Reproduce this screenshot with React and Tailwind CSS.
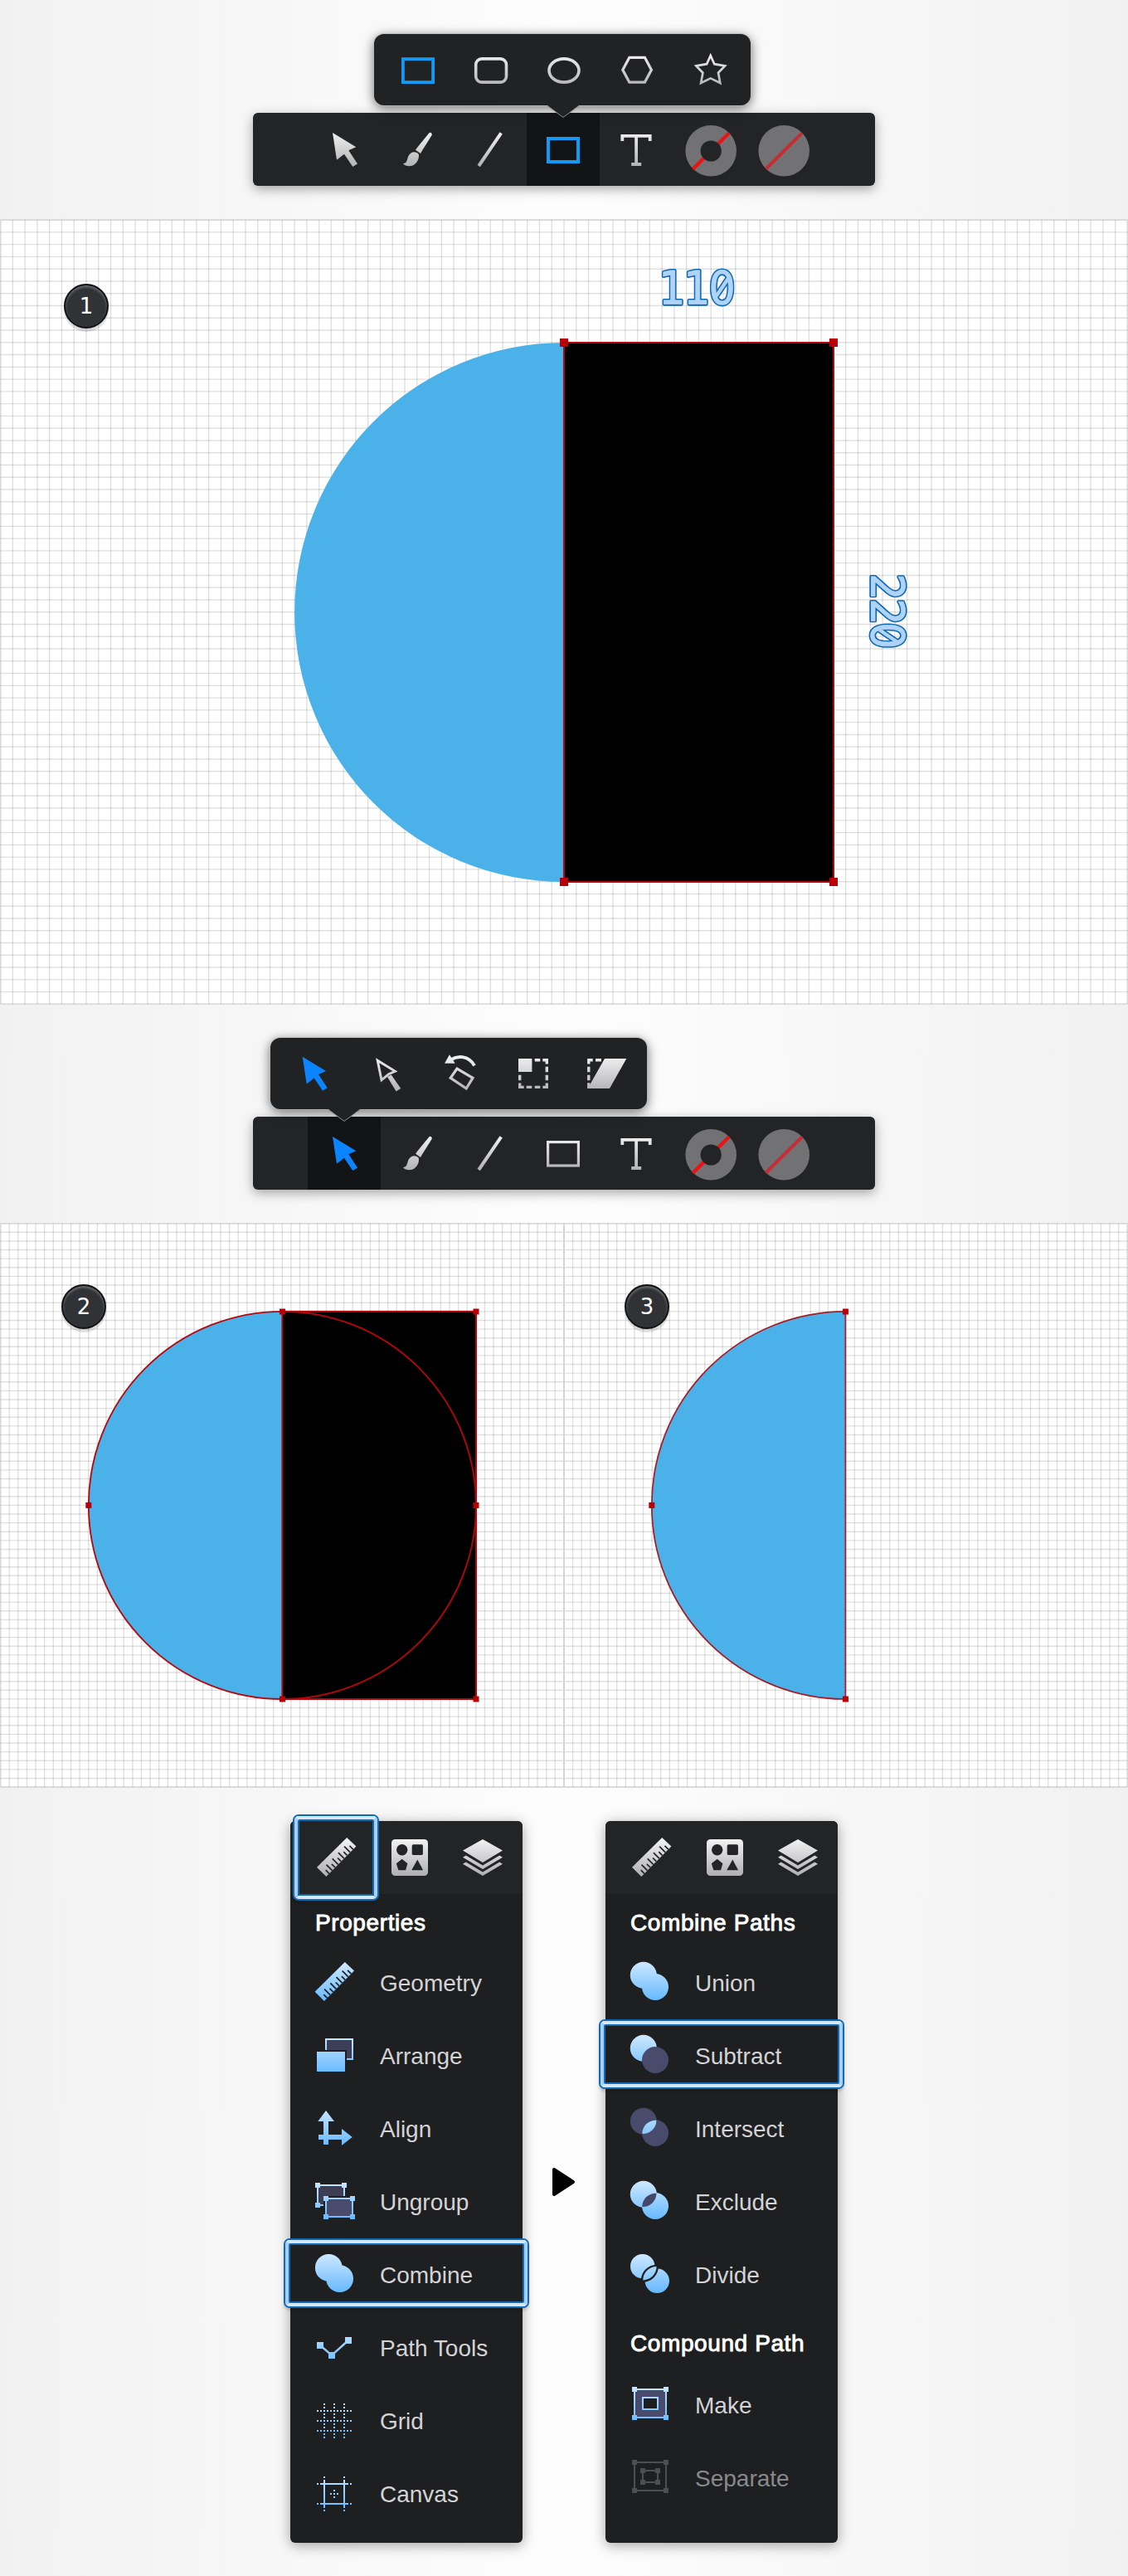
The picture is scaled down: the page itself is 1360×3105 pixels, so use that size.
import React from "react";

const GREY = "url(#grey)";
const BLUE = "url(#sky)";
const SLATE = "#484b6c";
const PANEL = "#1e1f21";

function Gradients() {
  return (
    <svg className="absolute h-0 w-0" aria-hidden="true">
      <defs>
        <linearGradient id="grey" gradientUnits="userSpaceOnUse" x1="0" y1="22" x2="0" y2="66">
          <stop offset="0" stopColor="#f2f2f3" />
          <stop offset="1" stopColor="#b0b0b2" />
        </linearGradient>
        <linearGradient id="sky" gradientUnits="userSpaceOnUse" x1="0" y1="22" x2="0" y2="67">
          <stop offset="0" stopColor="#cbe7ff" />
          <stop offset="1" stopColor="#66b9ff" />
        </linearGradient>
      </defs>
    </svg>
  );
}

/* ---------- toolbar icons, drawn in an 88 x 88 cell ---------- */

const CURSOR = "M30 24L58.3 41.3L49.3 45.3L60 61.5L54.3 65L44 49.7L35 56.7Z";

const Cursor = ({ active }) => <path d={CURSOR} fill={active ? "#0b84ff" : GREY} />;
const Brush = () => (
  <g fill={GREY}>
    <path d="M58 24.8Q59.6 23 61.2 24.6Q62.2 26 61.3 27.6L50 45.6L48 49L42 44.8L44.7 41Z" />
    <path d="M27 61.2C32.5 61 31.5 55 34 51C37 46.4 42 46 45.6 49.6C47.2 54 44 62 38 63.8C34 64.8 29 64.2 27 61.2Z" />
  </g>
);
const Line = () => <path d="M30.2 64L57.2 24.4" stroke={GREY} strokeWidth="4" />;
const Rect = ({ active }) =>
  active ? (
    <rect x="26" y="31" width="36" height="28" fill="none" stroke="#129af4" strokeWidth="4" />
  ) : (
    <rect x="25.6" y="30.6" width="36.8" height="28.4" fill="none" stroke={GREY} strokeWidth="3.2" />
  );
const TextTool = () => (
  <path d="M27.3 34V27.8H60.7V34M44.1 27.8V62M38.2 62H50.2" fill="none" stroke={GREY} strokeWidth="3.8" />
);
const StrokeNone = () => (
  <g>
    <circle cx="46.2" cy="45.8" r="30.8" fill="#727275" />
    <path d="M24.6 67.6L68 24.2" stroke="#e81516" strokeWidth="4.4" />
    <circle cx="46.2" cy="46" r="12.6" fill="#222426" />
  </g>
);
const FillNone = () => (
  <g>
    <circle cx="46.2" cy="45.8" r="30.8" fill="#727275" />
    <path d="M24.4 67.5L68 24.4" stroke="#c62c31" strokeWidth="4" />
  </g>
);

/* ---------- popover icons ---------- */

const PopRect = () => <rect x="25.9" y="30.1" width="36.2" height="28" fill="none" stroke="#129af4" strokeWidth="3.8" />;
const PopRounded = () => <rect x="25.7" y="29.9" width="36.8" height="28.2" rx="7" fill="none" stroke={GREY} strokeWidth="3.6" />;
const PopEllipse = () => <ellipse cx="44" cy="44" rx="18" ry="14.1" fill="none" stroke={GREY} strokeWidth="3.6" />;
const PopHexagon = () => (
  <path d="M34.8 28.3H53.4L61.4 43.2L53.4 58.1H34.8L26.8 43.2Z" fill="none" stroke={GREY} strokeWidth="3.2" />
);
const PopStar = () => (
  <path
    d="M44.7 26L49.3 36.2L62 38.5L54 46.7L56.3 59L44.7 53.4L33.1 59L35.4 46.7L27.4 38.5L40.1 36.2Z"
    fill="none" stroke={GREY} strokeWidth="2.7" strokeMiterlimit="8"
  />
);
const PopCursor = () => <path d={CURSOR} transform="translate(-0.3 -1.2)" fill="#0b84ff" />;
const PopDirect = () => (
  <g>
    <path d="M44 47L48.7 44.6L60.2 61L54.6 64.4Z" fill={GREY} />
    <path d="M32.2 27.2L53.4 40.2L45.6 43.8L37 50.8Z" fill="#212224" stroke={GREY} strokeWidth="2.9" strokeMiterlimit="8" />
  </g>
);
const PopRotate = () => (
  <g>
    <path d="M25 30.7L30.9 20.2L37.7 30.7Z" fill={GREY} />
    <path d="M32 26.4C42 21 54 21.4 61 33.4" fill="none" stroke={GREY} strokeWidth="4" />
    <path d="M40 37.2L59 48.3L51.2 61L32.2 48.4Z" fill="none" stroke={GREY} strokeWidth="3.2" />
  </g>
);
const PopScale = () => (
  <g>
    <rect x="26" y="25" width="16.4" height="16" fill={GREY} />
    <path
      d="M45.7 26.8H52.3M55.3 26.8H60.3V31.6M60.3 34.7V41.3M60.3 44.7V51.3M60.3 54.5V59.4H55.3M52.3 59.4H45.7M42.3 59.4H35.7M32.7 59.4H27.7V54.5M27.7 51.3V44.7"
      fill="none" stroke={GREY} strokeWidth="3.4"
    />
  </g>
);
const PopSkew = () => (
  <g>
    <path d="M42 25H68.3L48 61H21.6Z" fill={GREY} />
    <path d="M31 26.8H38M27.7 26.8H22.8V31.6M22.8 34.7V41.3M22.8 44.7V51.3M22.8 54.3V61" fill="none" stroke={GREY} strokeWidth="3.4" />
  </g>
);

function Cell({ icon: Icon, active, tall = true }) {
  return (
    <div className={(tall ? "h-[88px]" : "h-[86px]") + " w-[88px] shrink-0" + (active ? " bg-[#131416]" : "")}>
      <svg className="block h-[88px] w-[88px]" viewBox="0 0 88 88" fill="none">
        <Icon active={active} />
      </svg>
    </div>
  );
}

const TOOLS = [Cursor, Brush, Line, Rect, TextTool, StrokeNone, FillNone];

function Toolbar({ active }) {
  return (
    <div className="flex h-[88px] w-[750px] rounded-md bg-[#222426] pl-[66px] shadow-[0_4px_14px_rgba(0,0,0,0.34)]">
      {TOOLS.map((t, i) => (
        <Cell key={i} icon={t} active={i === active} />
      ))}
    </div>
  );
}

function Popover({ icons, tip, className }) {
  return (
    <div
      className={
        "relative z-10 flex h-[86px] w-[454px] rounded-xl bg-[#212224] pl-[9px] shadow-[0_0_0_1px_rgba(190,190,190,0.75),0_3px_14px_rgba(0,0,0,0.6)] " +
        className
      }
    >
      {icons.map((ic, i) => (
        <Cell key={i} icon={ic} tall={false} />
      ))}
      <svg className={"absolute top-[84px] h-[18px] w-[42px] " + tip} viewBox="0 0 42 18">
        <path d="M0 0H42V1.6H40.5L21 16.4L1.5 1.6H0Z" fill="#212224" />
        <path d="M1.5 2.4L21 16.4L40.5 2.4" fill="none" stroke="#8d8d8f" strokeWidth="1" />
      </svg>
    </div>
  );
}

/* ---------- canvases ---------- */

function Grid({ x, y, step, cols, rows }) {
  const w = cols * step;
  const h = rows * step;
  let v = "";
  let hz = "";
  for (let i = 1; i < cols; i++) v += `M${(x + i * step).toFixed(2)} ${y}v${h}`;
  for (let i = 1; i < rows; i++) hz += `M${x} ${(y + i * step).toFixed(2)}h${w}`;
  return (
    <g fill="none" stroke="#000" strokeOpacity="0.12" strokeWidth="1.4">
      <rect x={x} y={y} width={w} height={h} fill="#fff" stroke="#dadada" strokeOpacity="1" strokeWidth="2" />
      <path d={v} />
      <path d={hz} />
    </g>
  );
}

function Handles({ points, size }) {
  return points.map(([cx, cy], i) => (
    <rect key={i} x={cx - size / 2} y={cy - size / 2} width={size} height={size} fill="#b90006" />
  ));
}

function Measure({ x, y, rotate = 0, value, advance }) {
  const chars = {
    x: advance,
    y: 20,
    transform: "scale(0.93 1)",
    fontFamily: "'DejaVu Sans', sans-serif",
    fontSize: 54.5,
  };
  return (
    <g transform={`translate(${x} ${y}) rotate(${rotate})`}>
      <g aria-hidden="true">
        <text {...chars} fill="#0c68b0" stroke="#0c68b0" strokeWidth="4.2" strokeLinejoin="round">{value}</text>
        <path d="M21.5 10.5L36.5 -11.5" stroke="#0c68b0" strokeWidth="7.4" />
        <path d="M21 11.2L37 -12.2" stroke="#b0d3f8" strokeWidth="4.2" />
      </g>
      <text {...chars} fill="#b0d3f8" stroke="#b0d3f8" strokeWidth="0.9">{value}</text>
    </g>
  );
}

function Badge({ n, className }) {
  return (
    <div
      className={
        "absolute flex h-[54px] w-[54px] items-center justify-center rounded-full border-2 border-[#131316] bg-[#303236] font-['DejaVu_Sans',sans-serif] text-[26px] font-normal leading-none text-white shadow-[0_4px_1px_rgba(0,0,0,0.13),inset_0_2px_3px_rgba(255,255,255,0.3)] " +
        className
      }
    >
      {n}
    </div>
  );
}

function CanvasOne() {
  return (
    <div className="relative h-[947px]">
      <svg className="block h-[947px] w-[1360px]" viewBox="0 264 1360 947">
        <Grid x={0.6} y={265.1} step={14.77} cols={92} rows={64} />
        <path d="M680 413A325 325 0 0 0 680 1063Z" fill="#4bb2e9" />
        <rect x="680" y="413" width="325" height="650" fill="#000" stroke="#b3060c" strokeWidth="2" />
        <Handles size={10} points={[[680, 413], [1005, 413], [680, 1063], [1005, 1063]]} />
        <Measure x={842.3} y={346} value="110" advance="-51.6 -19.4 13" />
        <Measure x={1071.2} y={738} rotate={90} value="220" advance="-50.2 -18 13" />
      </svg>
      <Badge n="1" className="left-[77px] top-[78px]" />
    </div>
  );
}

function CanvasTwo() {
  return (
    <div className="relative h-[681px]">
      <svg className="block h-[681px] w-[1360px]" viewBox="0 1474 1360 681" fill="none">
        <Grid x={0.6} y={1474.7} step={10.615} cols={128} rows={64} />
        <path d="M680 1475V2154" stroke="#d6d6d6" strokeWidth="2" />
        <path d="M340.4 1580.8A233.6 233.6 0 0 0 340.4 2048Z" fill="#4bb2e9" />
        <rect x="340.4" y="1580.8" width="233.6" height="467.2" fill="#000" stroke="#b3060c" strokeWidth="2" />
        <circle cx="340.4" cy="1814.4" r="233.6" stroke="#b8060c" strokeWidth="1.8" />
        <Handles size={7} points={[[340.5, 1581], [574, 1581], [106.8, 1814.4], [574, 1814.4], [340.5, 2048], [574, 2048]]} />
        <path d="M1019.4 1580.8A233.6 233.6 0 0 0 1019.4 2048Z" fill="#4bb2e9" stroke="#a81a24" strokeWidth="1.7" />
        <Handles size={7} points={[[1019.4, 1581], [785.8, 1814.4], [1019.4, 2048]]} />
      </svg>
      <Badge n="2" className="left-[74px] top-[74px]" />
      <Badge n="3" className="left-[753px] top-[74px]" />
    </div>
  );
}

/* ---------- panel icons ---------- */

function Ruler({ fill, hole }) {
  let ticks = "";
  for (let i = 1; i <= 9; i++) {
    const x = 31.3 + i * 3.6;
    const y = 67 - i * 3.66;
    const l = i % 2 ? 4.2 : 7;
    ticks += `M${x} ${y}l${-l} ${-l}`;
  }
  return (
    <g>
      <path d="M56.2 20L67.4 30.6L31.3 67L20 55.7Z" fill={fill} />
      <path d={ticks} stroke={hole} strokeWidth="1.7" />
    </g>
  );
}
const HeadRuler = () => <Ruler fill={GREY} hole="#232426" />;
const HeadShapes = () => (
  <g>
    <rect x="22" y="22" width="44" height="44" rx="4.5" fill={GREY} />
    <g fill="#232426">
      <circle cx="34.7" cy="34.7" r="6.7" />
      <rect x="46.7" y="28.3" width="13.2" height="12.6" rx="1.6" />
      <path d="M34.7 45.8L41.4 51.3L39 59.3H30.4L27.8 51.3Z" />
      <path d="M53.3 46.6L60.1 59.3H46.2Z" />
    </g>
  </g>
);
const HeadLayers = () => (
  <g fill={GREY}>
    <path d="M44 22L68 35.6L44 50L20 35.6Z" />
    <path d="M20 43.8L23.8 41.4L44 53.4L64.2 41.4L68 43.8L44 58Z" />
    <path d="M20 51.8L23.8 49.4L44 61.4L64.2 49.4L68 51.8L44 66Z" />
  </g>
);

const Squares = ({ points, fill = BLUE, size = 6 }) =>
  points.map(([x, y], i) => <rect key={i} x={x - size / 2} y={y - size / 2} width={size} height={size} fill={fill} />);

const Geometry = () => (
  <g transform="translate(9.6 1)">
    <Ruler fill={BLUE} hole={PANEL} />
  </g>
);
const Arrange = () => (
  <g>
    <rect x="43" y="26" width="32" height="24" fill="#3d3f59" stroke={BLUE} strokeWidth="2" />
    <rect x="30" y="39" width="38" height="28" fill={PANEL} />
    <rect x="32" y="41" width="34" height="24" fill={BLUE} />
  </g>
);
const Align = () => (
  <path d="M43 24L53 37H46V53H62V46L74.7 56L62 66V59H46V65H40V59H34V53H40V37H33.3Z" fill={BLUE} />
);
const Ungroup = () => (
  <g>
    <rect x="33" y="26" width="32" height="24" fill="#3d3e54" stroke={BLUE} strokeWidth="2" />
    <Squares points={[[33, 26], [65, 26], [33, 50]]} />
    <rect x="40" y="39" width="38" height="28" fill={PANEL} />
    <rect x="43" y="42" width="32" height="22" fill={SLATE} stroke={BLUE} strokeWidth="2" />
    <Squares points={[[43, 42], [75, 42], [43, 64], [75, 64]]} />
  </g>
);
const Combine = () => (
  <g fill={BLUE}>
    <circle cx="46.3" cy="37.4" r="16.4" />
    <circle cx="59.6" cy="50.6" r="16.4" />
  </g>
);
const PathTools = () => (
  <g>
    <path d="M36 43L50 55L70 37" fill="none" stroke={BLUE} strokeWidth="2.4" />
    <Squares size={8} points={[[36, 43], [50, 55], [70, 37]]} />
  </g>
);
const GridIcon = () => (
  <path
    d="M41 25V67M53 25V67M65 25V67M32 34H74M32 46H74M32 58H74"
    stroke={BLUE} strokeWidth="2" strokeDasharray="2 2" shapeRendering="crispEdges"
  />
);
const CanvasIcon = () => (
  <path
    d="M41 25v2M41 29V63M41 65v2M65 25v2M65 29V63M65 65v2M32 34h2M36 34H70M72 34h2M32 58h2M36 58H70M72 58h2M52 46h2M48 46h2M56 46h2M53 41v2M53 49v2"
    stroke={BLUE} strokeWidth="2"
  />
);

const LENS = "M44.3 51.9A16 16 0 0 1 61.4 35.8A16 16 0 0 1 44.3 51.9Z";
const Pair = ({ a, b, lens }) => (
  <g>
    <circle cx="45.8" cy="36.8" r="16" fill={a} />
    <circle cx="60" cy="51" r="16" fill={b} />
    {lens && <path d={LENS} fill={lens} />}
  </g>
);
const Union = () => <Pair a={BLUE} b={BLUE} />;
const Subtract = () => <Pair a={BLUE} b={SLATE} />;
const Intersect = () => <Pair a={SLATE} b={SLATE} lens={BLUE} />;
const Exclude = () => <Pair a={BLUE} b={BLUE} lens="#444768" />;
const Divide = () => (
  <g>
    <circle cx="44.7" cy="35.7" r="14.7" fill={BLUE} />
    <circle cx="62.3" cy="53.3" r="14.7" fill={BLUE} />
    <path d="M45.2 52.4A16.6 16.6 0 0 1 61.6 36A16.6 16.6 0 0 1 45.2 52.4Z" fill={BLUE} stroke={PANEL} strokeWidth="4.6" paintOrder="stroke" />
  </g>
);
const CORNERS = [[35, 27], [73, 27], [35, 61], [73, 61]];
const Make = () => (
  <g>
    <rect x="35" y="27" width="38" height="34" fill={SLATE} stroke={BLUE} strokeWidth="2" />
    <rect x="45" y="37" width="18" height="14" fill={PANEL} stroke={BLUE} strokeWidth="2" />
    <Squares points={CORNERS} />
  </g>
);
const Separate = () => (
  <g>
    <rect x="35" y="27" width="38" height="34" stroke="#4e4f51" strokeWidth="2" />
    <rect x="45" y="37" width="18" height="14" stroke="#4e4f51" strokeWidth="2" />
    <Squares fill="#4e4f51" points={[...CORNERS, [45, 37], [63, 37], [45, 51], [63, 51]]} />
  </g>
);

/* ---------- panels ---------- */

function Highlight({ className }) {
  return (
    <div className={"absolute rounded-[7px] border-2 border-[#1069b1] shadow-[0_3px_3px_rgba(0,0,0,0.15)] " + className}>
      <div className="h-full w-full rounded-[5px] border-4 border-x-[#a9cff9] border-y-[#d3e8fd]">
        <div className="h-full w-full rounded-[2px] border-2 border-[#1069b1]" />
      </div>
    </div>
  );
}

function Row({ icon: Icon, label, selected, disabled }) {
  return (
    <div className={"relative flex h-[88px] items-center text-[28px] leading-[32px] " + (disabled ? "text-[#88898b]" : "text-[#d3d3d5]")}>
      <svg className="h-[88px] w-[108px] shrink-0" viewBox="0 0 108 88" fill="none">
        <Icon />
      </svg>
      <span className="pt-[5px]">{label}</span>
      {selected && <Highlight className="-left-2 top-[2px] h-[84px] w-[296px]" />}
    </div>
  );
}

function Heading({ children, className }) {
  return (
    <h2 className={"pl-[30px] text-[28px] leading-[32px] tracking-[0.6px] text-white [-webkit-text-stroke:0.9px_white] " + className}>
      {children}
    </h2>
  );
}

function Panel({ selectedTab, children }) {
  return (
    <div className="h-[870px] w-[280px] rounded-md bg-[#1e1f21] shadow-[0_3px_16px_rgba(0,0,0,0.36)]">
      <div className="relative flex h-[88px] rounded-t-md bg-[#232426] pl-3">
        <Cell icon={HeadRuler} />
        <Cell icon={HeadShapes} />
        <Cell icon={HeadLayers} />
        {selectedTab && <Highlight className="-top-2 left-[3px] h-[104px] w-[104px]" />}
      </div>
      {children}
    </div>
  );
}

const BAND = "bg-[linear-gradient(90deg,#f1f1f1,#fdfdfd_50%,#f1f1f1)]";

export default function App() {
  return (
    <main className="w-[1360px] overflow-hidden bg-white font-['Liberation_Sans',Arial,sans-serif]">
      <Gradients />
      <section className={"h-[264px] pt-[41px] " + BAND}>
        <Popover className="ml-[451px]" tip="left-[206.5px]" icons={[PopRect, PopRounded, PopEllipse, PopHexagon, PopStar]} />
        <div className="ml-[305px] mt-[9px]">
          <Toolbar active={3} />
        </div>
      </section>
      <CanvasOne />
      <section className={"h-[263px] pt-[40px] " + BAND}>
        <Popover className="ml-[326px]" tip="left-[68px]" icons={[PopCursor, PopDirect, PopRotate, PopScale, PopSkew]} />
        <div className="ml-[305px] mt-[9px]">
          <Toolbar active={0} />
        </div>
      </section>
      <CanvasTwo />
      <section className={"flex h-[950px] items-center justify-center " + BAND}>
        <Panel selectedTab>
          <Heading className="h-[61px] pt-[19px]">Properties</Heading>
          <Row icon={Geometry} label="Geometry" />
          <Row icon={Arrange} label="Arrange" />
          <Row icon={Align} label="Align" />
          <Row icon={Ungroup} label="Ungroup" />
          <Row icon={Combine} label="Combine" selected />
          <Row icon={PathTools} label="Path Tools" />
          <Row icon={GridIcon} label="Grid" />
          <Row icon={CanvasIcon} label="Canvas" />
        </Panel>
        <svg className="h-10 w-[100px]" viewBox="0 0 100 40">
          <path d="M38 5L61 20L38 35Z" fill="#000" stroke="#000" strokeWidth="4" strokeLinejoin="round" />
        </svg>
        <Panel>
          <Heading className="h-[61px] pt-[19px]">Combine Paths</Heading>
          <Row icon={Union} label="Union" />
          <Row icon={Subtract} label="Subtract" selected />
          <Row icon={Intersect} label="Intersect" />
          <Row icon={Exclude} label="Exclude" />
          <Row icon={Divide} label="Divide" />
          <Heading className="h-[69px] pt-[25px]">Compound Path</Heading>
          <Row icon={Make} label="Make" />
          <Row icon={Separate} label="Separate" disabled />
        </Panel>
      </section>
    </main>
  );
}
